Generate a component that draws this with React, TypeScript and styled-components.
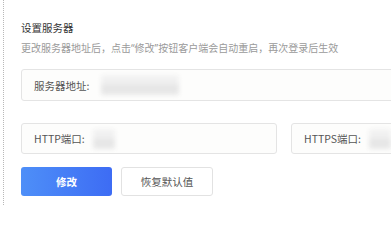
import styled, { createGlobalStyle } from "styled-components";

const GlobalStyle = createGlobalStyle`
  html, body {
    margin: 0;
    padding: 0;
    background: #fff;
    overflow: hidden;
  }
  body {
    font-family: "Noto Sans CJK SC", "Noto Sans", sans-serif;
  }
`;

function Field({ label, blurWidth, width, height }: { label: string; blurWidth: number; width: number; height: number }) {
  return (
    <StyledField $width={width} $height={height}>
      <StyledLabel>{label}</StyledLabel>
      <StyledValue $width={blurWidth} />
    </StyledField>
  );
}

function App() {
  return (
    <StyledPage>
      <GlobalStyle />
      <StyledPanel>
        <StyledTitle>设置服务器</StyledTitle>
        <StyledHint>更改服务器地址后，点击“修改”按钮客户端会自动重启，再次登录后生效</StyledHint>
        <StyledAddress>
          <Field label="服务器地址:" blurWidth={78} width={526} height={32} />
        </StyledAddress>
        <StyledRow>
          <Field label="HTTP端口:" blurWidth={22} width={256} height={31} />
          <Field label="HTTPS端口:" blurWidth={22} width={256} height={31} />
        </StyledRow>
        <StyledActions>
          <StyledPrimary>修改</StyledPrimary>
          <StyledSecondary>恢复默认值</StyledSecondary>
        </StyledActions>
      </StyledPanel>
    </StyledPage>
  );
}

export default App;

const StyledPage = styled.div`
  width: 391px;
  height: 205px;
  padding-left: 3px;
  box-sizing: border-box;
  overflow: hidden;
`;

const StyledPanel = styled.div`
  height: 100%;
  border-left: 1px dotted #b8b8b8;
  padding: 21px 0 0 17px;
  box-sizing: border-box;
  display: flex;
  flex-direction: column;
`;

const StyledTitle = styled.div`
  font-size: 10.5px;
  line-height: 14px;
  color: #333;
`;

const StyledHint = styled.div`
  margin-top: 6px;
  font-family: "Noto Sans", "Noto Sans CJK SC", sans-serif;
  font-size: 10px;
  line-height: 14px;
  color: #9a9a9a;
  white-space: nowrap;
`;

const StyledAddress = styled.div`
  margin-top: 14px;
`;

const StyledField = styled.div<{ $width: number; $height: number }>`
  flex: none;
  width: ${(p) => p.$width}px;
  height: ${(p) => p.$height}px;
  box-sizing: border-box;
  border: 1px solid #e4e4e4;
  border-radius: 3px;
  background: #fdfdfc;
  display: flex;
  align-items: center;
  padding-left: 12px;
`;

const StyledLabel = styled.span`
  font-size: 10.5px;
  color: #555;
  white-space: nowrap;
`;

const StyledValue = styled.span<{ $width: number }>`
  width: ${(p) => p.$width}px;
  height: 20px;
  margin-left: 12px;
  border-radius: 2px;
  background: linear-gradient(#f3f3f3 0%, #efefef 45%, #e6e6e6 55%, #e8e8e8 100%);
  filter: blur(2px);
`;

const StyledRow = styled.div`
  display: flex;
  gap: 14px;
  margin-top: 22px;
  & > div > span:last-child {
    margin-left: 8px;
  }
`;

const StyledActions = styled.div`
  display: flex;
  gap: 9px;
  margin-top: 13px;
`;

const StyledPrimary = styled.button`
  width: 91px;
  height: 29px;
  border: 0;
  border-radius: 3px;
  background: linear-gradient(90deg, #4e8ff8, #3d6cf4);
  color: #fff;
  font-family: inherit;
  font-size: 10.5px;
  font-weight: 700;
  cursor: pointer;
`;

const StyledSecondary = styled.button`
  width: 92px;
  height: 29px;
  border: 1px solid #e2e2e2;
  border-radius: 3px;
  background: #fff;
  color: #555;
  font-family: inherit;
  font-size: 10.5px;
  cursor: pointer;
`;
